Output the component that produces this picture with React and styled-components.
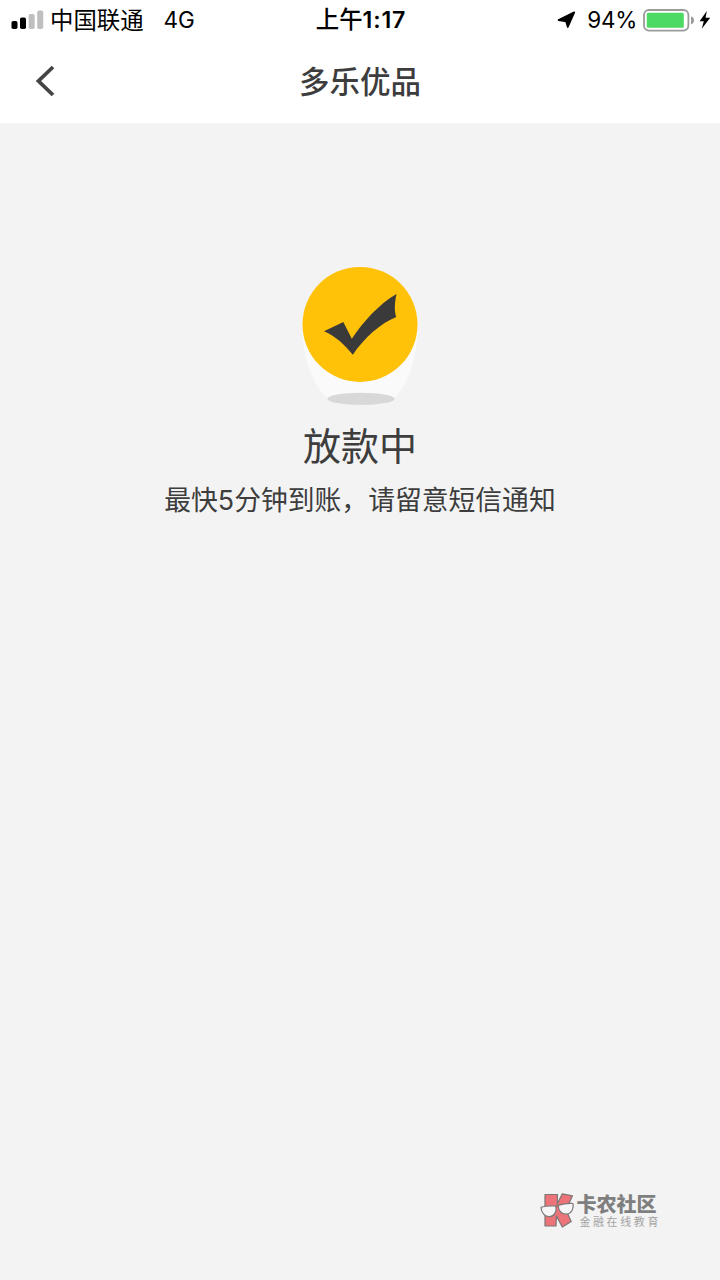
import React from "react";
import styled, { createGlobalStyle } from "styled-components";

const App = () => (
  <Page lang="zh-CN">
    <GlobalStyle />
    <StatusBar>
      <StatusLeft>
        <SignalIcon />
        <Carrier>中国联通</Carrier>
        <Network>4G</Network>
      </StatusLeft>
      <Clock>
        上午<span>1:17</span>
      </Clock>
      <StatusRight>
        <LocationIcon />
        <Percent>94%</Percent>
        <BatteryIcon />
        <BoltIcon />
      </StatusRight>
    </StatusBar>
    <Header>
      <BackButton aria-label="返回">
        <svg width="20" height="32" viewBox="0 0 20 32">
          <path
            d="M18 2 L3.5 16 L18 30"
            fill="none"
            stroke="#444444"
            strokeWidth="3.8"
          />
        </svg>
      </BackButton>
      <Title>多乐优品</Title>
    </Header>
    <Content>
      <CheckBadge />
      <Status>放款中</Status>
      <Hint>最快5分钟到账，请留意短信通知</Hint>
    </Content>
    <Watermark>
      <GlassesLogo />
      <Brand>
        <BrandName>卡农社区</BrandName>
        <BrandNote>金融在线教育</BrandNote>
      </Brand>
    </Watermark>
  </Page>
);

const SignalIcon = () => (
  <svg width="33" height="20" viewBox="0 0 33 20">
    <rect x="0.5" y="11" width="6" height="8" rx="1.8" fill="#000000" />
    <rect x="9" y="7.5" width="6" height="11.5" rx="1.8" fill="#000000" />
    <rect x="17.7" y="4" width="6" height="15" rx="1.8" fill="#bfbfbf" />
    <rect x="26.2" y="0.5" width="6" height="18.5" rx="1.8" fill="#bfbfbf" />
  </svg>
);

const LocationIcon = () => (
  <svg width="19" height="18" viewBox="0 0 19 18">
    <path
      d="M17.2 1.4 L10.8 16 L9.2 10.4 L1.6 9 Z"
      fill="#000000"
      stroke="#000000"
      strokeWidth="1.8"
      strokeLinejoin="round"
    />
  </svg>
);

const BatteryIcon = () => (
  <svg width="52" height="23" viewBox="0 0 52 23">
    <rect
      x="1"
      y="1"
      width="44.4"
      height="20.6"
      rx="5"
      fill="#ffffff"
      stroke="#9b9b9b"
      strokeWidth="1.8"
    />
    <rect x="3.8" y="3.8" width="37" height="15" rx="1.6" fill="#4cd964" />
    <path d="M48 7.6 Q51 8.4 51 11.4 Q51 14.4 48 15.2 Z" fill="#9b9b9b" />
  </svg>
);

const BoltIcon = () => (
  <svg width="12" height="20" viewBox="0 0 12 20">
    <path d="M7.8 1 L0.6 11.2 H4.8 L2.8 18.8 L11.2 7.8 H6.6 Z" fill="#000000" />
  </svg>
);

const CheckBadge = () => (
  <svg width="118" height="140" viewBox="0 0 118 140">
    <path
      d="M1 66 C3 94 11 118 27 133 H93 C107 118 115 94 117 66 Z"
      fill="#fafafa"
    />
    <ellipse cx="60" cy="132.8" rx="33.7" ry="6.1" fill="#d8d8d8" />
    <circle cx="59" cy="58.4" r="57.5" fill="#ffc208" />
    <path
      d="M23 65.3 L42.3 56 L50.8 72.8 C62 56 78 38 95.6 28 C93.6 36 93.2 45 95.2 51 C80 57 63 72 51.8 88.8 C44 79 35 70.5 23 65.3 Z"
      fill="#3b3a3a"
    />
  </svg>
);

const GlassesLogo = () => (
  <svg width="35" height="36" viewBox="0 0 35 36">
    <g stroke="#7d7676" strokeWidth="1.2" strokeLinejoin="round">
      <path
        d="M5 1.5 H17.5 L17.3 11 L22.3 0.8 L32.5 2.8 L26 17 L31.2 28.6 L22.3 34 L16.4 23 L16 33 H5 Z"
        fill="#ec7378"
      />
      <path
        d="M1 14.3 C5 13 11 12.6 15.8 13 C17.2 19 14 23.3 9.8 23.6 C4.8 23.9 1.2 20 1 14.3 Z"
        fill="#f7f7f7"
      />
      <path
        d="M18.3 12.4 C23 10.8 28 10.2 33 10.5 C34.2 16 31 20.9 26.6 21.2 C21.8 21.5 18.2 18 18.3 12.4 Z"
        fill="#f7f7f7"
      />
      <path d="M15.8 13.2 L18.3 12.8" fill="none" />
    </g>
  </svg>
);

const GlobalStyle = createGlobalStyle`
  body {
    margin: 0;
    background: #f3f3f3;
    font-family: Inter, "Noto Sans CJK SC", sans-serif;
  }

  svg {
    display: block;
    flex-shrink: 0;
  }
`;

const Page = styled.div`
  position: relative;
  display: flex;
  flex-direction: column;
  min-height: 1280px;
  background: #f3f3f3;
`;

const StatusBar = styled.div`
  display: grid;
  grid-template-columns: 1fr auto 1fr;
  align-items: center;
  height: 40px;
  padding: 0 9px 0 11px;
  background: #ffffff;
  color: #000000;
  white-space: nowrap;
`;

const StatusLeft = styled.div`
  display: flex;
  align-items: center;
`;

const StatusRight = styled.div`
  display: flex;
  align-items: center;
  justify-content: flex-end;

  svg:last-child {
    margin-left: 4px;
  }
`;

const Carrier = styled.span`
  margin-left: 6px;
  padding-top: 2px;
  font-size: 23.4px;
  line-height: 38px;
`;

const Network = styled.span`
  margin-left: 20px;
  font-size: 22.5px;
  line-height: 40px;
`;

const Clock = styled.div`
  font-size: 23.4px;
  font-weight: 500;
  line-height: 40px;

  span {
    font-size: 23.2px;
    font-weight: 600;
    letter-spacing: 0.8px;
  }
`;

const Percent = styled.span`
  margin: 0 6px 0 11px;
  font-size: 22.5px;
  line-height: 40px;
  letter-spacing: -0.3px;
`;

const Header = styled.div`
  display: grid;
  grid-template-columns: 1fr auto 1fr;
  align-items: center;
  height: 83px;
  background: #ffffff;
`;

const BackButton = styled.button`
  display: flex;
  justify-self: start;
  margin: 0 0 2px 35px;
  padding: 0;
  border: 0;
  background: none;
  cursor: pointer;
`;

const Title = styled.h1`
  margin: 0;
  font-size: 30.5px;
  font-weight: 500;
  line-height: 44px;
  color: #3d3d3d;
`;

const Content = styled.div`
  display: flex;
  flex-direction: column;
  align-items: center;
  padding-top: 143px;
  color: #3d3d3d;
`;

const Status = styled.h2`
  margin: 12px 0 0;
  font-size: 38px;
  font-weight: 400;
  line-height: 56px;
`;

const Hint = styled.p`
  margin: 6px 0 0;
  font-size: 26.8px;
  line-height: 40px;
  white-space: nowrap;
`;

const Watermark = styled.div`
  position: absolute;
  right: 59px;
  bottom: 51px;
  display: flex;
  align-items: center;
`;

const Brand = styled.div`
  display: flex;
  flex-direction: column;
  margin: 1px 0 0 1px;
  white-space: nowrap;
`;

const BrandName = styled.span`
  font-size: 20px;
  font-weight: 900;
  line-height: 21px;
  color: #7f7f7f;
`;

const BrandNote = styled.span`
  padding-left: 3px;
  font-size: 11px;
  line-height: 13px;
  letter-spacing: 2.6px;
  color: #a3a3a3;
`;

export default App;
